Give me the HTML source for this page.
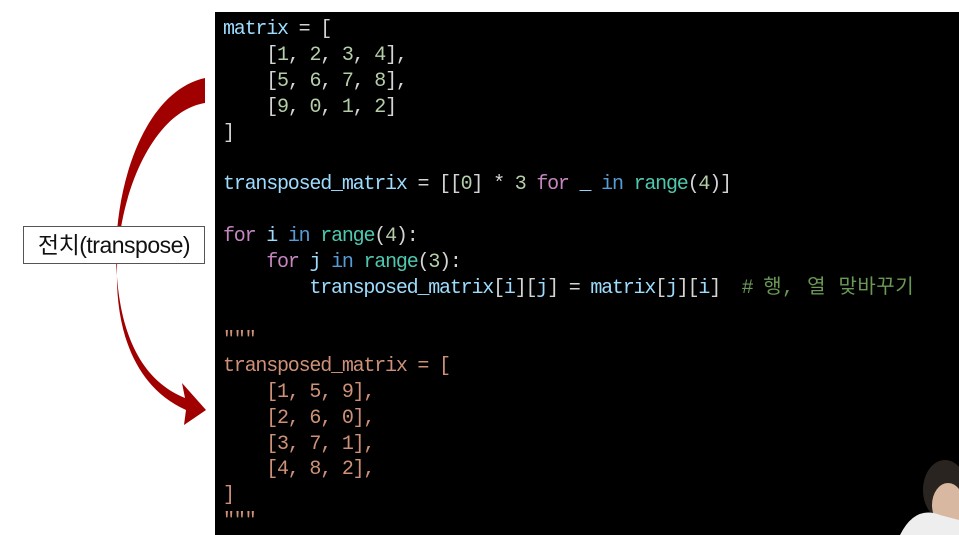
<!DOCTYPE html>
<html><head><meta charset="utf-8"><style>
body{margin:0;width:959px;height:535px;background:#fff;position:relative;overflow:hidden}
#code{position:absolute;left:215px;top:12px;width:744px;height:523px;background:#000}
pre{margin:0;position:absolute;left:223px;top:17px;font:20px/25.9px "Liberation Mono","Noto Sans CJK KR",monospace;letter-spacing:-1.2px;color:#d4d4d4}
.v{color:#9cdcfe}.n{color:#b5cea8}.k{color:#c586c0}.b{color:#569cd6}.f{color:#4ec9b0}.c{color:#6a9955}.s{color:#ce9178}
.kr{letter-spacing:0.5px}
#lbl{position:absolute;left:23px;top:226px;width:180px;height:36px;border:1px solid #555;background:#fff;font:23px/36px "Liberation Sans","Noto Sans CJK KR",sans-serif;text-align:center;color:#111;letter-spacing:-0.5px}
</style></head><body>
<svg width="959" height="535" style="position:absolute;left:0;top:0">
<path d="M205 78 C150 90 118 170 116 250 C116 330 140 380 185 398 L182 383 L206 410 L184 425 L186 410 C130 385 112 320 118 250 C125 175 160 110 205 103 Z" fill="#a00000"/>
</svg>
<div id="code"></div>
<pre><span class="v">matrix</span> = [
    [<span class="n">1</span>, <span class="n">2</span>, <span class="n">3</span>, <span class="n">4</span>],
    [<span class="n">5</span>, <span class="n">6</span>, <span class="n">7</span>, <span class="n">8</span>],
    [<span class="n">9</span>, <span class="n">0</span>, <span class="n">1</span>, <span class="n">2</span>]
]

<span class="v">transposed_matrix</span> = [[<span class="n">0</span>] * <span class="n">3</span> <span class="k">for</span> <span class="v">_</span> <span class="b">in</span> <span class="f">range</span>(<span class="n">4</span>)]

<span class="k">for</span> <span class="v">i</span> <span class="b">in</span> <span class="f">range</span>(<span class="n">4</span>):
    <span class="k">for</span> <span class="v">j</span> <span class="b">in</span> <span class="f">range</span>(<span class="n">3</span>):
        <span class="v">transposed_matrix</span>[<span class="v">i</span>][<span class="v">j</span>] = <span class="v">matrix</span>[<span class="v">j</span>][<span class="v">i</span>]  <span class="c"># <span class="kr">행, 열 맞바꾸기</span></span>

<span class="s">"""
transposed_matrix = [
    [1, 5, 9],
    [2, 6, 0],
    [3, 7, 1],
    [4, 8, 2],
]
"""</span></pre>
<div id="lbl">전치(transpose)</div>
<svg width="959" height="535" style="position:absolute;left:0;top:0">
<ellipse cx="945" cy="490" rx="22" ry="30" fill="#2a2420"/>
<ellipse cx="948" cy="505" rx="16" ry="22" fill="#d8b8a0"/>
<path d="M900 535 Q915 505 940 515 L959 520 L959 535 Z" fill="#eee"/>
</svg>
</body></html>
